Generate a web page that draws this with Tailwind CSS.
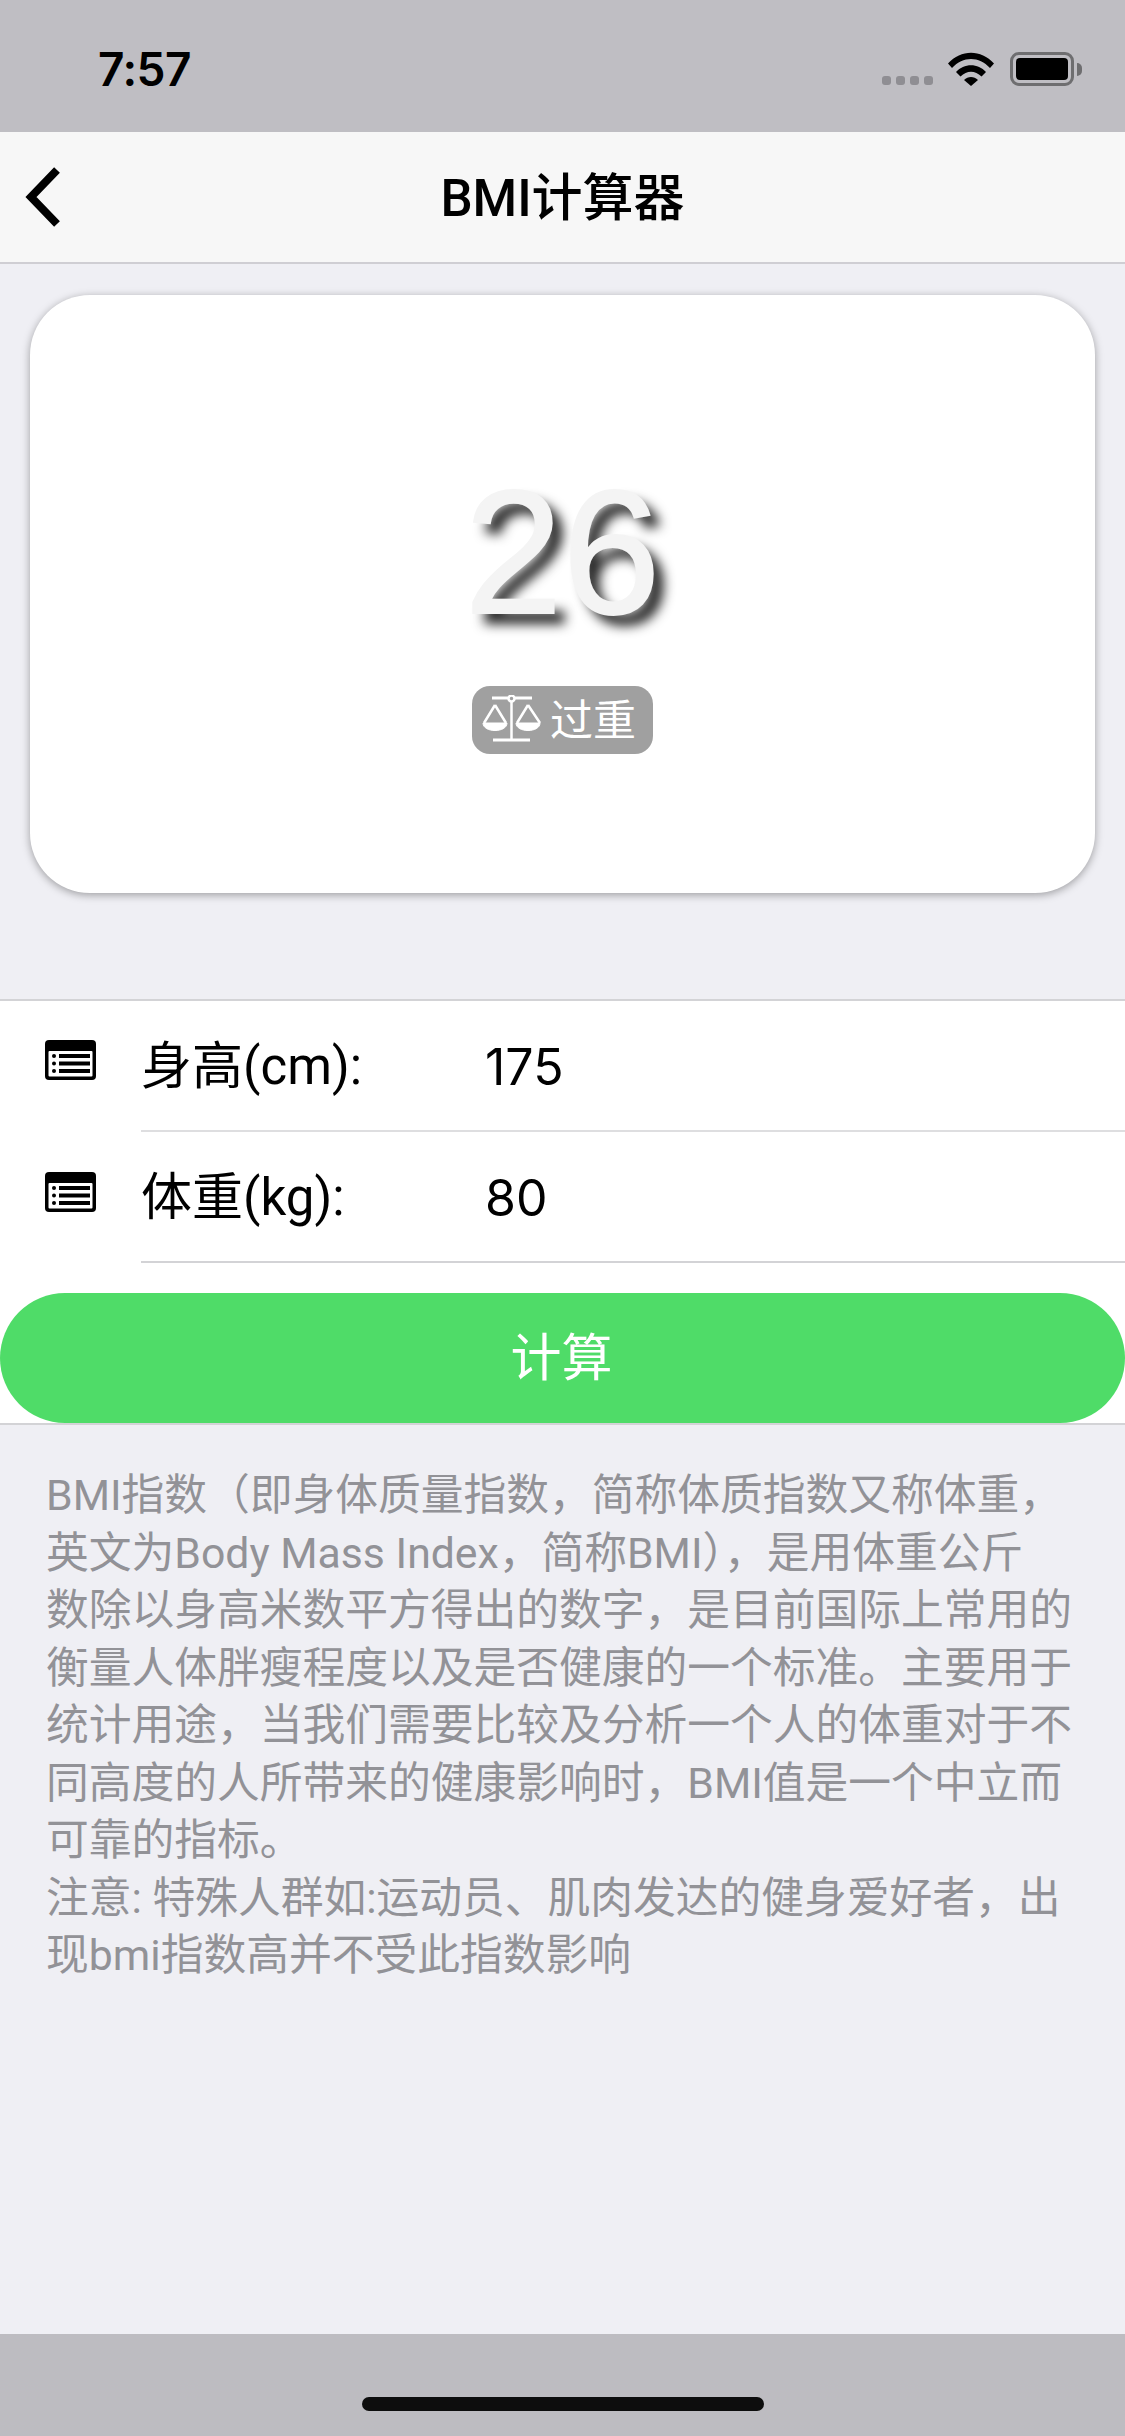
<!DOCTYPE html>
<html lang="zh">
<head>
<meta charset="utf-8">
<script src="https://cdn.jsdelivr.net/npm/@tailwindcss/browser@4"></script>
</head>
<body class="m-0">
<div class="w-[1125px] h-[2436px] bg-[#efeff4] flex flex-col overflow-hidden font-['Roboto','Noto_Sans_CJK_SC',sans-serif]">
  <!-- status bar -->
  <div class="h-[132px] bg-[#bfbec3] flex items-start justify-between shrink-0 pt-[51px] pl-[98px] pr-[43px]">
    <span class="text-[46px] leading-[36px] font-semibold text-black font-['Inter',sans-serif] tracking-[-0.5px]">7:57</span>
    <div class="flex items-end h-[35px]">
      <div class="flex gap-[5px] pb-[1px]">
        <span class="w-[9px] h-[9px] rounded-[3px] bg-[#8f8e93]"></span>
        <span class="w-[9px] h-[9px] rounded-[3px] bg-[#8f8e93]"></span>
        <span class="w-[9px] h-[9px] rounded-[3px] bg-[#8f8e93]"></span>
        <span class="w-[9px] h-[9px] rounded-[3px] bg-[#8f8e93]"></span>
      </div>
      <svg class="ml-[15px]" width="46" height="34" viewBox="0 0 46 34">
        <path d="M0 11.5C13 -3 33 -3 46 11.5L42 16C31 4 15 4 4 16Z" fill="#000"/>
        <path d="M8 20C16 11 30 11 38 20L33.5 24.5C27 18 19 18 12.5 24.5Z" fill="#000"/>
        <path d="M16 28C20 24 26 24 30 28L23 34Z" fill="#000"/>
      </svg>
      <div class="ml-[16px] w-[64px] h-[34px] rounded-[9px] border-[3px] border-[#6e6e70] p-[3px] flex">
        <div class="flex-1 bg-black rounded-[4px]"></div>
      </div>
      <div class="ml-[3px] mb-[10px] w-[5px] h-[13px] bg-[#6e6e70] rounded-r-[5px]"></div>
    </div>
  </div>
  <!-- nav bar -->
  <div class="relative h-[132px] bg-[#f7f7f7] border-b-[2px] border-[#cfced3] flex items-center justify-center shrink-0 pt-[3px]">
    <svg class="absolute left-[24px] top-[34px]" width="38" height="62" viewBox="0 0 38 62">
      <path d="M33 4L7 31L33 58" fill="none" stroke="#000" stroke-width="8"/>
    </svg>
    <span class="text-[51px] font-medium text-black leading-none">BMI计算器</span>
  </div>
  <!-- result card -->
  <div class="mx-[30px] mt-[31px] h-[598px] bg-white rounded-[60px] shadow-[0_2px_8px_rgba(0,0,0,0.35)] flex flex-col items-center shrink-0">
    <span class="mt-[169px] text-[176px] leading-[176px] text-[#f4f4f4] font-['Liberation_Sans',sans-serif] [-webkit-text-stroke:2px_#f4f4f4] [text-shadow:11px_11px_12px_rgba(0,0,0,0.85)]">26</span>
    <div class="mt-[46px] w-[181px] h-[68px] bg-[#a0a0a0] rounded-[18px] flex items-center pl-[10px]">
      <svg width="60" height="50" viewBox="0 0 60 50" fill="none" stroke="#fff" stroke-width="2.5">
        <path d="M10 3H50" stroke-width="3"/>
        <circle cx="29.5" cy="3.5" r="3" fill="#a0a0a0"/>
        <path d="M29.5 7V45"/>
        <path d="M11 45H48" stroke-width="3"/>
        <path d="M13 10L2 28M13 10L24 28"/>
        <path d="M46 10L35 28M46 10L58 28"/>
        <path d="M1 28H25C25 38 1 38 1 28Z" fill="#fff" stroke-width="1"/>
        <path d="M34 28H58C58 38 34 38 34 28Z" fill="#fff" stroke-width="1"/>
      </svg>
      <span class="ml-[8px] text-[43px] leading-none text-white pt-[2px]">过重</span>
    </div>
  </div>
  <!-- form -->
  <div class="mt-[106px] bg-white border-t-[2px] border-b-[2px] border-t-[#d3d3d6] border-b-[#d3d3d6] shrink-0 h-[426px]">
    <div class="flex h-[131px]">
      <div class="w-[141px] shrink-0 pl-[45px] pt-[39px]">
        <svg width="51" height="40" viewBox="0 0 51 40">
          <rect width="51" height="40" rx="4" fill="#000"/>
          <rect x="3.5" y="11" width="44" height="25.5" rx="1" fill="#fff"/>
          <circle cx="9" cy="16" r="2" fill="#000"/><circle cx="9" cy="23.5" r="2" fill="#000"/><circle cx="9" cy="31" r="2" fill="#000"/>
          <rect x="14" y="14" width="31" height="4" fill="#000"/><rect x="14" y="21.5" width="31" height="4" fill="#000"/><rect x="14" y="29" width="31" height="4" fill="#000"/>
        </svg>
      </div>
      <div class="flex-1 flex items-center border-b-[2px] border-[#dedee0] text-[51px] text-black pt-[2px]">
        <span class="w-[344px] leading-none">身高(cm):</span>
        <span class="leading-none text-[50px] font-['Inter',sans-serif]">175</span>
      </div>
    </div>
    <div class="flex h-[131px]">
      <div class="w-[141px] shrink-0 pl-[45px] pt-[40px]">
        <svg width="51" height="40" viewBox="0 0 51 40">
          <rect width="51" height="40" rx="4" fill="#000"/>
          <rect x="3.5" y="11" width="44" height="25.5" rx="1" fill="#fff"/>
          <circle cx="9" cy="16" r="2" fill="#000"/><circle cx="9" cy="23.5" r="2" fill="#000"/><circle cx="9" cy="31" r="2" fill="#000"/>
          <rect x="14" y="14" width="31" height="4" fill="#000"/><rect x="14" y="21.5" width="31" height="4" fill="#000"/><rect x="14" y="29" width="31" height="4" fill="#000"/>
        </svg>
      </div>
      <div class="flex-1 flex items-center border-b-[2px] border-[#d3d3d6] text-[51px] text-black pt-[2px]">
        <span class="w-[344px] leading-none">体重(kg):</span>
        <span class="leading-none text-[50px] font-['Inter',sans-serif]">80</span>
      </div>
    </div>
    <div class="mt-[30px] h-[130px] bg-[#4fdc68] rounded-[65px] flex items-center justify-center text-[51px] text-white pt-[2px] pr-[2px]">计算</div>
  </div>
  <!-- description -->
  <p class="mt-[42px] pl-[46px] text-[42.75px] leading-[57.5px] text-[#929297] whitespace-nowrap">BMI指数（即身体质量指数，简称体质指数又称体重，<br>英文为Body Mass Index，简称BMI），是用体重公斤<br>数除以身高米数平方得出的数字，是目前国际上常用的<br>衡量人体胖瘦程度以及是否健康的一个标准。主要用于<br>统计用途，当我们需要比较及分析一个人的体重对于不<br>同高度的人所带来的健康影响时，BMI值是一个中立而<br>可靠的指标。<br>注意: 特殊人群如:运动员、肌肉发达的健身爱好者，出<br>现bmi指数高并不受此指数影响</p>
  <!-- home indicator -->
  <div class="mt-auto h-[102px] bg-[#bdbcc1] shrink-0 flex justify-center pt-[63px]">
    <div class="w-[402px] h-[14px] rounded-full bg-[#0d0d0d]"></div>
  </div>
</div>
</body>
</html>
